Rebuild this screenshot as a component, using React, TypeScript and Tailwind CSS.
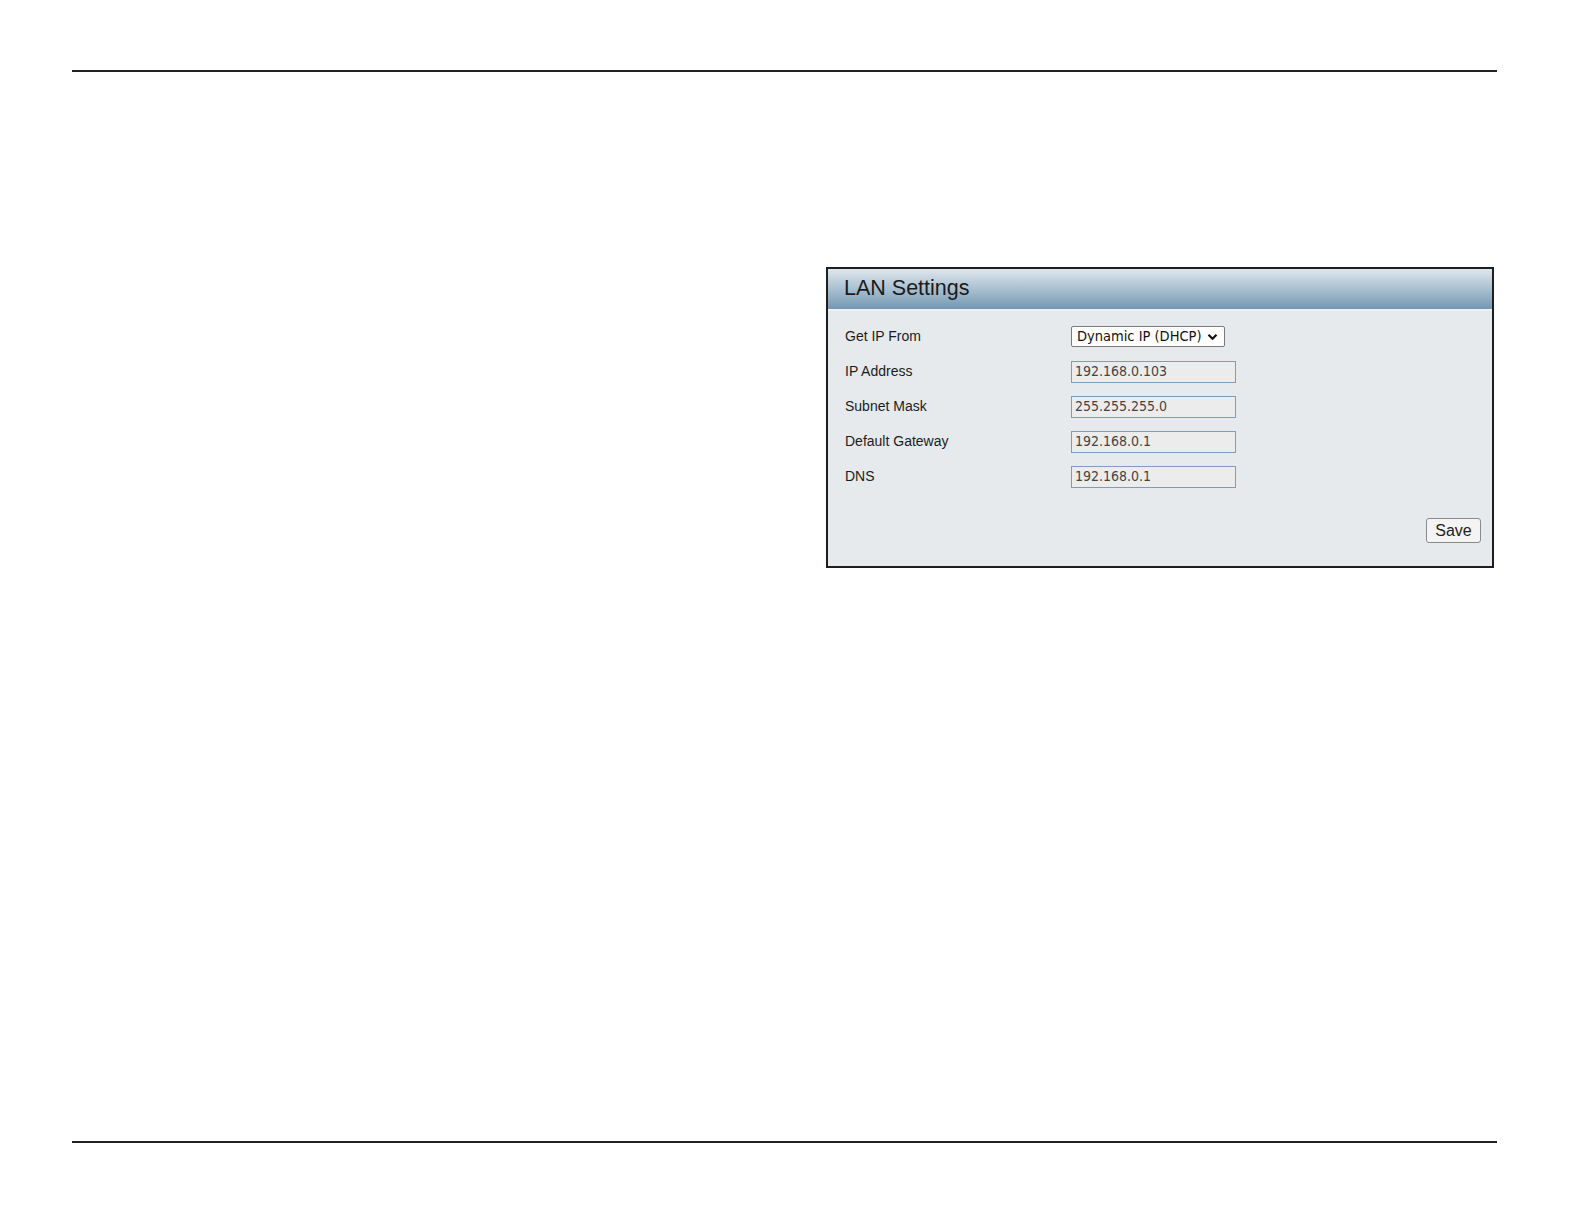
import React from "react";

const rows: { label: string; value?: string; select?: boolean }[] = [
  { label: "Get IP From", select: true },
  { label: "IP Address", value: "192.168.0.103" },
  { label: "Subnet Mask", value: "255.255.255.0" },
  { label: "Default Gateway", value: "192.168.0.1" },
  { label: "DNS", value: "192.168.0.1" },
];

export default function App() {
  return (
    <div className="w-full h-screen overflow-hidden bg-white pt-[70px] pl-[72px] pr-[87px] font-['Liberation_Sans',Arial,sans-serif]">
      <div className="h-[2px] bg-[#222222]" />
      <div className="mt-[195px] ml-[754px] w-[668px] h-[301px] border-2 border-[#1e1e1e] bg-[#e6eaed] flex flex-col">
        <div className="h-[40px] flex items-center pl-[16px] bg-gradient-to-b from-[#dfe7ec] via-[#a9c0d1] to-[#7497b1]">
          <span className="text-[21.5px] text-[#1b1b1b] leading-none">LAN Settings</span>
        </div>
        <div className="h-[2px] bg-[#eef1f3]" />
        <div className="flex flex-col pt-[8px] pl-[17px]">
          {rows.map((r) => (
            <div key={r.label} className="h-[35px] flex items-center">
              <div className="w-[226px] text-[14px] text-[#1c1c1c]">{r.label}</div>
              {r.select ? (
                <div className="h-[21px] w-[154px] bg-white border border-[#7a7a7a] rounded-[2px] flex items-center pl-[5px] pr-[6px] justify-between font-['DejaVu_Sans_Condensed','DejaVu_Sans',sans-serif] text-[14.5px] text-[#111111]">
                  <span>Dynamic IP (DHCP)</span>
                  <svg width="11" height="8" viewBox="0 0 11 8">
                    <path d="M1.5 1.8 L5.5 5.8 L9.5 1.8" fill="none" stroke="#111" strokeWidth="2.2" />
                  </svg>
                </div>
              ) : (
                <div className="h-[22px] w-[165px] bg-[#ececec] border border-[#7f9db9] flex items-center pl-[3px] font-['DejaVu_Sans_Condensed','DejaVu_Sans',sans-serif] text-[14px] text-[#444444]">
                  {r.value}
                </div>
              )}
            </div>
          ))}
        </div>
        <div className="flex-1" />
        <div className="flex justify-end pr-[11px] pb-[23px]">
          <div className="h-[25px] w-[55px] flex items-center justify-center bg-[#f4f4f4] border border-[#8a8a8a] rounded-[3px] text-[16px] text-[#222222]">
            Save
          </div>
        </div>
      </div>
      <div className="mt-[573px] h-[2px] bg-[#222222]" />
    </div>
  );
}
